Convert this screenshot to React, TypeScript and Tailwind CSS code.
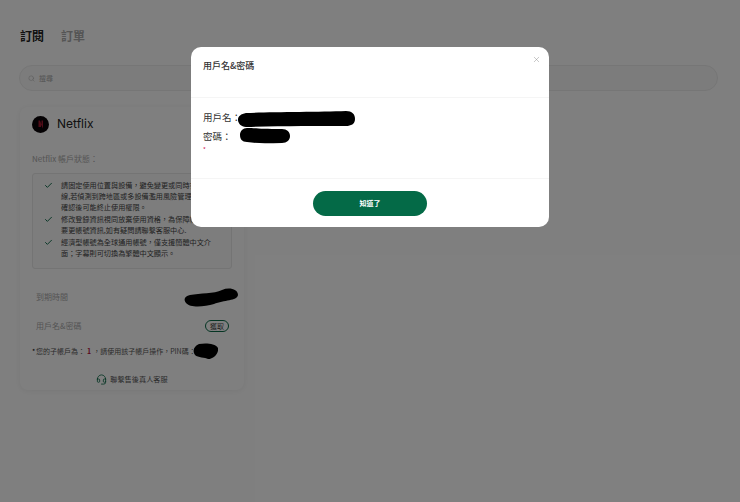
import React from "react";
import { Check, Search, X, Headset } from "lucide-react";

const notices = [
  ["請固定使用位置與設備，避免變更或同時多點上", "線,若偵測到跨地區或多設備濫用風險管理中，將", "確認後可能終止使用權限。"],
  ["修改登錄資訊視同放棄使用資格，為保障帳號安全", "要更帳號資訊,如有疑問請聯繫客服中心."],
  ["經濟型帳號為全球通用帳號，僅支援簡體中文介", "面；字幕則可切換為繁體中文顯示。"],
];

function Blob({ w, h, d }: { w: number; h: number; d: string }) {
  return (
    <svg width={w} height={h} viewBox={`0 0 ${w} ${h}`} className="shrink-0">
      <path d={d} fill="#000" />
    </svg>
  );
}

export default function App() {
  return (
    <div className="relative h-[502px] w-[740px] overflow-hidden bg-white font-['Noto_Sans_CJK_TC','Noto_Sans',sans-serif] text-[#333]">
      <div className="px-[19px] pt-[27px]">
        <div className="flex gap-[17px] pl-[1px] text-[12px] font-bold leading-[18px]">
          <span className="text-[#222]">訂閱</span>
          <span className="text-[#aaa]">訂單</span>
        </div>
        <div className="mt-[20px] flex h-[26px] w-[699px] items-center gap-[4px] rounded-full border border-[#ececec] bg-[#f8f8f8] px-[8px] text-[7px] text-[#aaa]">
          <Search size={7} strokeWidth={1.5} />
          <span>搜尋</span>
        </div>
        <div className="ml-[1px] mt-[16px] h-[283px] w-[224px] rounded-[8px] bg-white px-[12px] pt-[8px] shadow-[0_1px_6px_rgba(0,0,0,0.07)]">
          <div className="flex items-center gap-[8px]">
            <svg width="17" height="17" viewBox="0 0 17 17" className="shrink-0">
              <circle cx="8.5" cy="8.5" r="8.5" fill="#0b0508" />
              <path d="M6.5 4.5h1.5l1.5 4V4.5H11v8L9 8.5V11H6.5z" fill="#a01a30" />
            </svg>
            <span className="font-['Inter',sans-serif] text-[12px] leading-[18px] text-[#222]">Netflix</span>
          </div>
          <div className="mt-[20px] text-[8px] leading-[12px] text-[#aaa]">Netflix 帳戶狀態：</div>
          <div className="mt-[8px] flex h-[96px] w-[200px] flex-col gap-[1px] overflow-hidden rounded-[3px] border border-[#e8e8e8] bg-[#fafafa] pl-[11px] pt-[6px]">
            {notices.map((lines, i) => (
              <div key={i} className="flex gap-[8px] text-[7.15px] leading-[11px] text-[#444]">
                <Check size={9} strokeWidth={2.5} className="mt-[1px] shrink-0 text-[#0a6a47]" />
                <div className="min-w-0 whitespace-nowrap">
                  {lines.map((l, j) => (
                    <div key={j}>{l}</div>
                  ))}
                </div>
              </div>
            ))}
          </div>
          <div className="mr-[-6px] mt-[18px] flex h-[20px] items-center justify-between pl-[4px]">
            <span className="text-[8px] text-[#aaa]">到期時間</span>
            <Blob w={54} h={20} d="M6 8C16 6 30 7 38 3C45 0 54 2 54 8C53 14 40 13 30 17C20 20 6 21 2 16C-1 12 1 9 6 8Z" />
          </div>
          <div className="mt-[9px] flex h-[20px] items-center justify-between pl-[4px] pr-[3px]">
            <span className="text-[8px] text-[#aaa]">用戶名&密碼</span>
            <span className="flex h-[12px] w-[24px] items-center justify-center rounded-full border border-[#0a6a47] text-[7px] leading-none text-[#444]">獲取</span>
          </div>
          <div className="mt-[7px] flex h-[16px] items-center whitespace-nowrap text-[7px] text-[#555]">
            <span className="w-[4px] text-black">*</span>
            <span>您的子帳戶為：</span>
            <span className="mx-[2px] font-bold text-[#b3123a]">1</span>
            <span>，請使用該子帳戶操作，PIN碼：</span>
            <span className="ml-[-3px]">
              <Blob w={25} h={16} d="M6 1C12 0 22 0 25 5C26 10 21 16 15 16C12 14 5 15 2 12C-1 8 1 3 6 1Z" />
            </span>
          </div>
          <div className="mt-[15px] flex items-center justify-center gap-[3px] text-[7.2px] text-[#555]">
            <Headset size={11} strokeWidth={1.8} className="text-[#0a6a47]" />
            <span>聯繫售後真人客服</span>
          </div>
        </div>
      </div>

      <div className="absolute inset-0 bg-black/50" />

      <div className="absolute left-[191px] top-[47px] flex h-[180px] w-[358px] flex-col rounded-[10px] bg-white">
        <button className="absolute right-[8px] top-[8px] text-[#888]">
          <X size={9} strokeWidth={1.2} />
        </button>
        <div className="h-[51px] border-b border-[#f5f5f5] pl-[12px] pt-[11px] text-[9px] font-medium leading-[15px] text-[#333]">用戶名&密碼</div>
        <div className="h-[81px] border-b border-[#f5f5f5] pl-[12px] pt-[12px] text-[9.5px] text-[#333]">
          <div className="flex h-[18px] items-center whitespace-nowrap">
            <span className="mt-[-3px] w-[35px]">用戶名：</span>
            <Blob w={117} h={16} d="M8 2C30 1 80 1 108 0C114 0 117 3 117 8C117 13 113 15 108 15C80 15 40 15 8 16C3 16 0 12 0 9C0 5 3 3 8 2Z" />
          </div>
          <div className="mt-[-1px] flex h-[18px] items-center whitespace-nowrap">
            <span className="w-[37px]">密碼：</span>
            <Blob w={50} h={16} d="M7 0C15 0 20 1 42 1C47 1 50 4 50 8C50 12 47 15 42 15C30 15 20 16 7 14C2 14 0 11 0 7C0 3 3 0 7 0Z" />
          </div>
          <div className="text-[6px] leading-[10px] text-[#d0114a]">*</div>
        </div>
        <div className="flex flex-1 items-center justify-center">
          <button className="flex h-[25px] w-[114px] items-center justify-center rounded-full bg-[#046a47] text-[7px] font-bold text-white">知道了</button>
        </div>
      </div>
    </div>
  );
}
